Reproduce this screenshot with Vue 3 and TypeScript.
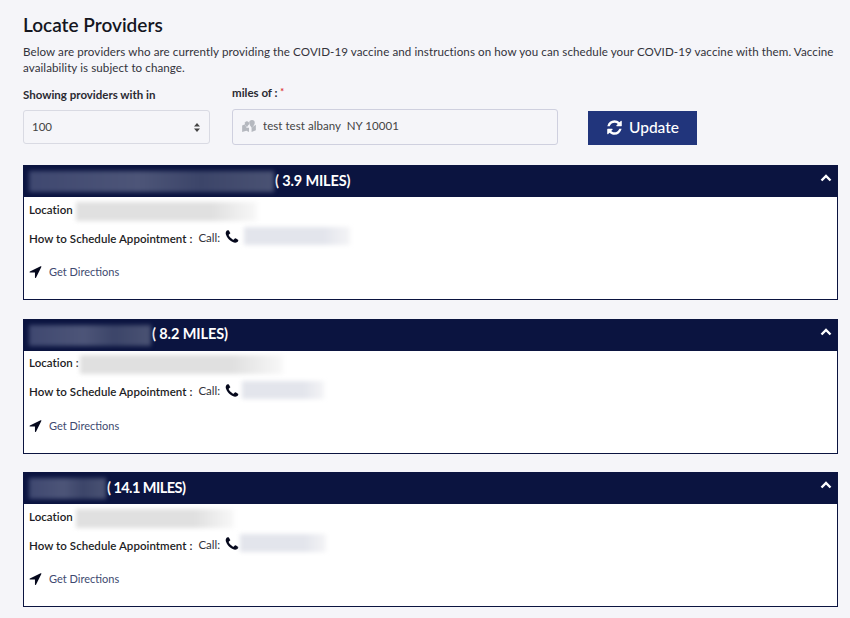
<script setup lang="ts">
interface Provider {
  miles: string
  track: number
  nameW: number
  locW: number
  locGap: number
  phoneW: number
  phoneGap: number
  colon: boolean
}
const providers: Provider[] = [
  { miles: '( 3.9 MILES)', track: -0.15, nameW: 245, locW: 181, locGap: 3, phoneW: 106, phoneGap: 4, colon: false },
  { miles: '( 8.2 MILES)', track: -0.1, nameW: 122, locW: 203, locGap: 1, phoneW: 82, phoneGap: 2, colon: true },
  { miles: '( 14.1 MILES)', track: -0.55, nameW: 77, locW: 158, locGap: 3, phoneW: 86, phoneGap: 0, colon: false },
]
const refresh = 'M1639 1056q0 5-1 7-64 268-268 434.5t-478 166.5q-146 0-282.5-55t-243.5-157l-129 129q-19 19-45 19t-45-19-19-45v-448q0-26 19-45t45-19h448q26 0 45 19t19 45-19 45l-137 137q71 66 161 102t187 36q134 0 250-65t186-179q11-17 53-117 8-23 30-23h192q13 0 22.5 9.5t9.5 22.5zm25-800v448q0 26-19 45t-45 19h-448q-26 0-45-19t-19-45 19-45l138-138q-148-137-349-137-134 0-250 65t-186 179q-11 17-53 117-8 23-30 23h-199q-13 0-22.5-9.5t-9.5-22.5v-7q65-268 270-434.5t480-166.5q146 0 284 55.5t245 156.5l130-129q19-19 45-19t45 19 19 45z'
const arrow = 'M1593 349l-640 1280q-17 35-57 35-5 0-15-2-22-5-35.5-22.5t-13.5-39.5v-576h-576q-22 0-39.5-13.5t-22.5-35.5 4-42 29-30l1280-640q13-7 29-7 27 0 45 19 15 14 18.5 34.5t-6.5 39.5z'
const phone = 'M1600 1240q0 27-10 70.5t-21 68.5q-21 50-122 106-94 51-186 51-27 0-53-3.5t-57.5-12.5-47-14.5-55.5-20.5-49-18q-98-35-175-83-127-79-264-216t-216-264q-48-77-83-175-3-9-18-49t-20.5-55.5-14.5-47-12.5-57.5-3.5-53q0-92 51-186 56-101 106-122 25-11 68.5-21t70.5-10q14 0 21 3 18 6 53 76 11 19 30 54t35 63.5 31 53.5q3 4 17.5 25t21.5 35.5 7 28.5q0 20-28.5 50t-62 55-62 53-28.5 46q0 9 5 22.5t8.5 20.5 14 24 11.5 19q76 137 174 235t235 174q2 1 19 11.5t24 14 20.5 8.5 22.5 5q18 0 46-28.5t53-62 55-62 50-28.5q14 0 28.5 7t35.5 21.5 25 17.5q25 15 53.5 31t63.5 35 54 30q70 35 76 53 3 7 3 21z'
</script>

<template>
  <main class="page">
    <h1 class="title">Locate Providers</h1>
    <p class="intro">Below are providers who are currently providing the COVID-19 vaccine and instructions on how you can schedule your COVID-19 vaccine with them. Vaccine availability is subject to change.</p>

    <form class="filters" @submit.prevent>
      <div class="field range">
        <label class="label">Showing providers with in</label>
        <div class="select-wrap">
          <select class="select">
            <option>100</option>
          </select>
          <svg class="updown" viewBox="0 0 6 9" width="6" height="9">
            <path d="M3 0 6 3.6H0zM3 9 0 5.4h6z" fill="#444" />
          </svg>
        </div>
      </div>
      <div class="field place">
        <label class="label small">miles of : <span class="req">*</span></label>
        <div class="input-box">
          <svg class="map" viewBox="0 0 16 14" width="14" height="12">
            <path d="M0 6.5 3.5 5 5 9l3 0 0 5-3-1.5L0 14zM16 5.5V12l-5 2V9.5l1.5-1.5z" fill="#b5b8bf" />
            <circle cx="11.5" cy="3.2" r="3.2" fill="#b5b8bf" />
            <path d="M8.7 5.5 11.5 9.5 14 5.5z" fill="#b5b8bf" />
            <path d="M5.5 1.5a2.6 2.6 0 0 1 2.4 3.6L5.5 8.5 3.3 5.1A2.6 2.6 0 0 1 5.5 1.5z" fill="#b5b8bf" />
          </svg>
          <input class="input" value="test test albany  NY 10001" />
        </div>
      </div>
      <button class="update" type="button">
        <svg viewBox="0 0 1792 1792" width="17" height="17"><path :d="refresh" fill="#fff" /></svg>
        Update
      </button>
    </form>

    <section class="list">
      <article v-for="p in providers" :key="p.miles" class="card">
        <header class="head">
          <span class="blur name" :style="{ width: p.nameW + 'px' }"></span>
          <span class="miles" :style="{ letterSpacing: p.track + 'px' }">{{ p.miles }}</span>
          <svg class="chev" viewBox="0 0 12 8" width="12" height="8">
            <path d="M1.5 6.5 6 2l4.5 4.5" fill="none" stroke="#fff" stroke-width="2.4" />
          </svg>
        </header>
        <div class="body">
          <div class="row loc">
            <span class="key">Location{{ p.colon ? ' :' : '' }}</span>
            <span class="blur grey" :style="{ width: p.locW + 'px', marginLeft: p.locGap + 'px' }"></span>
          </div>
          <div class="row sched">
            <span class="key">How to Schedule Appointment :</span>
            <span class="call">Call:</span>
            <svg class="phone" viewBox="0 0 1792 1792" width="16" height="16"><path :d="phone" fill="#05081c" /></svg>
            <span class="blur pale" :style="{ width: p.phoneW + 'px', marginLeft: p.phoneGap + 'px' }"></span>
          </div>
          <a class="dir" href="#" @click.prevent>
            <svg class="dir-icon" viewBox="0 0 1792 1792" width="15" height="15"><path :d="arrow" fill="#05081c" /></svg>
            <span>Get Directions</span>
          </a>
        </div>
      </article>
    </section>
  </main>
</template>

<style>
html, body { margin: 0; background: #f5f5f9; }
</style>

<style scoped>
.page {
  box-sizing: border-box;
  width: 850px;
  height: 618px;
  overflow: hidden;
  padding: 13px 12px 0 23px;
  background: #f5f5f9;
  font-family: Lato, "Liberation Sans", sans-serif;
  color: #2b2b33;
}
.title {
  margin: 0;
  font-size: 19px;
  line-height: 23px;
  font-weight: 600;
  color: #14161f;
}
.intro {
  margin: 8px 0 0;
  font-size: 11.6px;
  line-height: 16px;
  letter-spacing: 0.08px;
  color: #33333b;
}
.filters {
  display: flex;
  align-items: flex-end;
  margin-top: 4px;
  height: 65px;
}
.field { display: flex; flex-direction: column; }
.range { width: 187px; margin-right: 22px; padding-bottom: 1px; }
.place { width: 326px; margin-right: 30px; }
.label {
  font-size: 11.5px;
  line-height: 14px;
  font-weight: 700;
  color: #2a2a32;
  margin-bottom: 8px;
}
.small { margin-bottom: 9px; }
.req { color: #d33; font-size: 9px; vertical-align: 2px; }
.select-wrap { position: relative; height: 34px; }
.select {
  appearance: none;
  box-sizing: border-box;
  width: 100%;
  height: 34px;
  padding: 0 8px 2px;
  border: 1px solid #d9dae3;
  border-radius: 3px;
  background: #f5f5f9;
  font: 11.5px Lato, sans-serif;
  color: #444;
}
.updown { position: absolute; right: 10px; top: 13px; }
.input-box {
  display: flex;
  align-items: center;
  box-sizing: border-box;
  height: 36px;
  padding: 0 9px 3px;
  border: 1px solid #cfd0df;
  border-radius: 3px;
}
.map { flex: none; margin-right: 7px; }
.input {
  flex: 1;
  min-width: 0;
  border: 0;
  outline: 0;
  padding: 0;
  background: transparent;
  font: 11.5px Lato, sans-serif;
  letter-spacing: 0.05px;
  color: #444;
}
.update {
  display: flex;
  align-items: center;
  justify-content: center;
  gap: 6px;
  width: 109px;
  height: 34px;
  padding: 0 0 2px;
  border: 0;
  background: #21357c;
  color: #fff;
  font: 500 15.5px Lato, sans-serif;
}
.list {
  display: flex;
  flex-direction: column;
  gap: 18.5px;
  margin-top: 20px;
}
.card {
  box-sizing: border-box;
  width: 815px;
  height: 135px;
  border: 1px solid #0b1440;
  background: #fff;
}
.head {
  display: flex;
  align-items: center;
  height: 31px;
  background: #0b1440;
  padding: 0 5px;
}
.blur { display: block; flex: none; filter: blur(2px); }
.name { height: 21px; background: linear-gradient(90deg, #3f4870, #4d5578 45%, #3c4569 70%, #4a5273); }
.miles {
  margin-left: 1px;
  margin-bottom: 3px;
  font-size: 14.5px;
  font-weight: 700;
  color: #fff;
}
.chev { margin-left: auto; margin-bottom: 7px; }
.body { padding: 4px 5px 5px; }
.row { display: flex; align-items: center; }
.loc { height: 20px; }
.loc .key { margin-bottom: 4px; }
.sched { height: 20px; margin-top: 7px; }
.key {
  flex: none;
  font-size: 11.5px;
  font-weight: 600;
  letter-spacing: 0.05px;
  color: #1d1d24;
  white-space: pre;
}
.grey { height: 19px; background: linear-gradient(90deg, #e0e0e0 75%, #f8f8f8); }
.pale { height: 18px; margin-bottom: 4px; background: linear-gradient(90deg, #e3e5ec 75%, #f4f4f6); }
.call {
  margin-left: 6px;
  font-size: 11.5px;
  color: #33333b;
  position: relative;
  top: -1px;
}
.phone { margin-left: 4px; flex: none; position: relative; top: -1px; }
.dir {
  display: flex;
  align-items: center;
  margin-top: 16px;
  font-size: 11px;
  color: #3e4a70;
  text-decoration: none;
}
.dir-icon { margin-left: -1px; }
.dir span { margin-left: 6px; }
</style>
